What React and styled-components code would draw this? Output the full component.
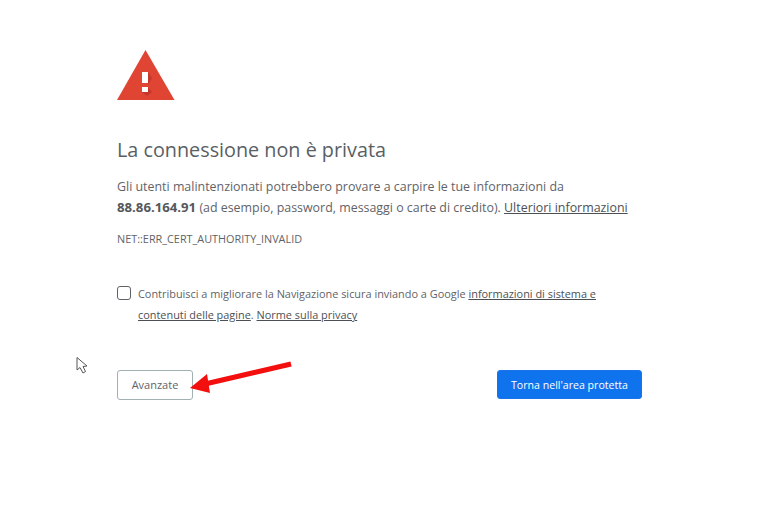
import React from "react";
import styled, { createGlobalStyle } from "styled-components";

const Global = createGlobalStyle`
  html, body { margin: 0; background: #fff; }
  body { font-family: "Open Sans", "Noto Sans", sans-serif; color: #5f6368; }
`;
const Page = styled.main`
  position: relative;
  width: 779px;
  height: 506px;
  overflow: hidden;
  background: #fff;
  padding: 50px 0 0 117px;
  box-sizing: border-box;
`;
const Content = styled.div`
  width: 525px;
`;
const WarnIcon = styled.svg`
  display: block;
  width: 58px;
  height: 50px;
`;
const Heading = styled.h1`
  margin: 37px 0 0;
  font-size: 19.8px;
  line-height: 26px;
  font-weight: 400;
  color: #5a5f64;
`;
const Para = styled.p`
  margin: 13px 0 0;
  font-size: 12.42px;
  line-height: 21px;
  white-space: nowrap;
  color: #5f6368;
`;
const Strong = styled.strong`
  font-size: 13.2px;
  font-weight: 700;
  color: #54585c;
`;
const Link = styled.a`
  color: #4c5054;
  text-decoration: underline;
`;
const Code = styled.div`
  margin-top: 14px;
  font-size: 10.85px;
  line-height: 14px;
  color: #5f6368;
`;
const OptIn = styled.div`
  display: flex;
  gap: 7px;
  margin-top: 37px;
  font-size: 10.92px;
  line-height: 21px;
  white-space: nowrap;
`;
const Box = styled.span`
  flex: none;
  width: 12px;
  height: 12px;
  margin-top: 3px;
  border: 1px solid #5f6368;
  border-radius: 3px;
  background: #fff;
`;
const Actions = styled.div`
  display: flex;
  justify-content: space-between;
  margin-top: 45px;
`;
const GhostButton = styled.button`
  width: 76px;
  height: 30px;
  padding: 0 0 1px;
  border: 1px solid #a3b0b3;
  border-radius: 3px;
  background: #fff;
  color: #5f6368;
  font: 400 11px "Open Sans", sans-serif;
`;
const PrimaryButton = styled.button`
  width: 145px;
  height: 29px;
  padding: 0;
  border: 1px solid #1a73e8;
  border-radius: 3px;
  background: #0f73ee;
  color: #fff;
  font: 500 10.6px "Open Sans", sans-serif;
`;
const Overlay = styled.svg`
  position: absolute;
  left: 70px;
  top: 350px;
  width: 240px;
  height: 55px;
  pointer-events: none;
`;

export default function App() {
  return (
    <Page>
      <Global />
      <Content>
        <WarnIcon viewBox="0 0 58 50">
          <path d="M28.5 0 L57.5 50 L0 50 Z" fill="#e04433" />
          <path d="M31 22 L35 28 L31 35 Z M31 37 L35 42 L30 46 L25 42 Z" fill="#c5372a" />
          <rect x="25" y="22" width="6" height="11" fill="#fff" />
          <rect x="25" y="37" width="6" height="5" fill="#fff" />
        </WarnIcon>
        <Heading>La connessione non è privata</Heading>
        <Para>
          Gli utenti malintenzionati potrebbero provare a carpire le tue informazioni da
          <br />
          <Strong>88.86.164.91</Strong> (ad esempio, password, messaggi o carte di credito).{" "}
          <Link href="#">Ulteriori informazioni</Link>
        </Para>
        <Code>NET::ERR_CERT_AUTHORITY_INVALID</Code>
        <OptIn>
          <Box />
          <span>
            Contribuisci a migliorare la Navigazione sicura inviando a Google{" "}
            <Link href="#">informazioni di sistema e</Link>
            <br />
            <Link href="#">contenuti delle pagine</Link>. <Link href="#">Norme sulla privacy</Link>
          </span>
        </OptIn>
        <Actions>
          <GhostButton>Avanzate</GhostButton>
          <PrimaryButton>Torna nell'area protetta</PrimaryButton>
        </Actions>
      </Content>
      <Overlay viewBox="70 350 240 55">
        <path d="M291 364 L205 384" stroke="#f40f0f" strokeWidth="5" fill="none" />
        <path d="M190 388 L207 374 L210 393 Z" fill="#f40f0f" />
        <path d="M77 357.5 L77 370 L80 367.5 L83 373 L85.5 371.5 L83 366.5 L87 366 Z" fill="#fff" stroke="#555" strokeWidth="1" />
      </Overlay>
    </Page>
  );
}
